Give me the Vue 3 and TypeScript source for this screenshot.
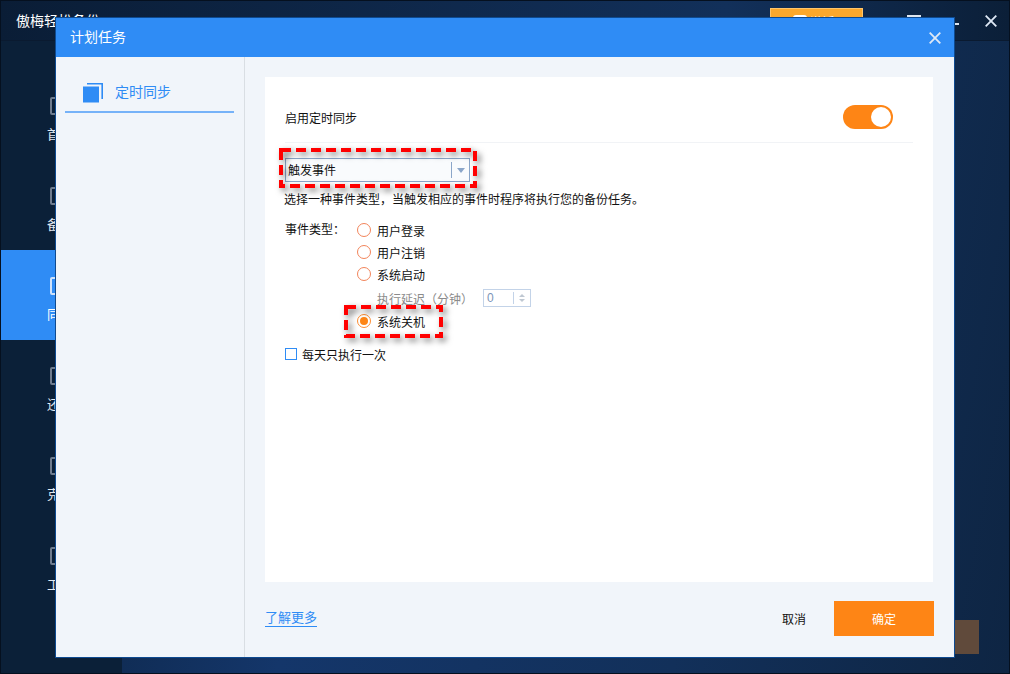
<template>
  <div class="app-window">
    <!-- Background app -->
    <header class="topbar">
      <span class="app-title">傲梅轻松备份</span>
      <div class="top-actions">
        <button class="upgrade-btn"><span class="upgrade-icon"></span>激活 ▾</button>
        <span class="menu-icon"></span>
        <span class="min-icon"></span>
        <svg class="win-close" width="12" height="12" viewBox="0 0 12 12"><path d="M.7.7l10.6 10.6M11.3.7L.7 11.3" /></svg>
      </div>
    </header>
    <div class="body-row">
      <nav class="side">
        <div v-for="item in sideItems" :key="item" :class="['side-item', { active: item === '同步' }]">
          <span class="side-icon"></span>
          <span class="side-label">{{ item }}</span>
        </div>
      </nav>
      <div class="promo"></div>
    </div>

    <!-- Modal -->
    <section class="modal">
      <div class="modal-head">
        <span>计划任务</span>
        <svg class="modal-close" width="12" height="12" viewBox="0 0 12 12"><path d="M.7.7l10.6 10.6M11.3.7L.7 11.3" /></svg>
      </div>
      <div class="modal-body">
        <aside class="modal-nav">
          <div class="nav-tab">
            <svg width="20" height="20" viewBox="0 0 20 20">
              <rect x="0" y="3.500" width="16" height="16" fill="#2f8cf5" />
              <path d="M4 .8h15.200v15.200" fill="none" stroke="#2f8cf5" stroke-width="1.600" />
            </svg>
            <span>定时同步</span>
          </div>
        </aside>
        <div class="modal-main">
          <div class="panel">
            <div class="enable-row">
              <span>启用定时同步</span>
              <span class="toggle"><span class="knob"></span></span>
            </div>

            <div class="select-wrap">
              <div class="select">
                <span class="select-text">触发事件</span>
                <span class="select-arrow"></span>
              </div>
              <svg class="mark mark-select" width="198" height="40">
                <rect x="2" y="2" width="194" height="36" />
              </svg>
            </div>

            <p class="desc">选择一种事件类型，当触发相应的事件时程序将执行您的备份任务。</p>

            <div class="events">
              <span class="events-label">事件类型：</span>
              <div class="event-list">
                <label v-for="ev in events" :key="ev" class="radio-row">
                  <span class="radio"></span>{{ ev }}
                </label>
                <div class="delay-row">
                  <span>执行延迟（分钟）</span>
                  <div class="spin">
                    <span class="spin-val">0</span>
                    <span class="spin-btns"><i class="up"></i><i class="down"></i></span>
                  </div>
                </div>
                <label class="radio-row checked">
                  <span class="radio"><i></i></span>系统关机
                  <svg class="mark mark-radio" width="99" height="33">
                    <rect x="2" y="2" width="95" height="29" />
                  </svg>
                </label>
              </div>
            </div>

            <label class="once-row"><span class="check"></span>每天只执行一次</label>
          </div>
          <div class="modal-foot">
            <a class="more">了解更多</a>
            <div class="foot-btns">
              <button class="cancel">取消</button>
              <button class="ok">确定</button>
            </div>
          </div>
        </div>
      </div>
    </section>
  </div>
</template>

<script setup lang="ts">
const sideItems: string[] = ['首页', '备份', '同步', '还原', '克隆', '工具']
const events: string[] = ['用户登录', '用户注销', '系统启动']
</script>

<style>
html, body { margin: 0; background: #0b2038; }
</style>

<style scoped>
.app-window {
  position: relative;
  width: 1010px;
  height: 674px;
  overflow: hidden;
  box-sizing: border-box;
  border: 1px solid #05101f;
  background: linear-gradient(100deg, #0a1f38 0%, #14366a 35%, #12305a 70%, #0e2543 100%);
  font-family: "Liberation Sans", "Noto Sans CJK SC", sans-serif;
  font-size: 12px;
  color: #111;
}

/* background app */
.topbar {
  height: 39px;
  display: flex;
  align-items: center;
  justify-content: space-between;
  background: linear-gradient(90deg, #0a1d36 0%, #12305a 72%, #0b1f38 100%);
  border-bottom: 1px solid #0a1a30;
}
.app-title {
  margin-left: 15px;
  margin-top: -1px;
  color: #fff;
  font-size: 14px;
}
.top-actions { display: flex; align-items: flex-start; height: 100%; }
.upgrade-btn {
  width: 93px;
  height: 26px;
  margin-top: 7px;
  border: 1px solid #ffc56a;
  background: #fba82c;
  color: #fff;
  font: inherit;
  padding: 0 0 0 4px;
}
.upgrade-icon {
  display: inline-block;
  width: 14px;
  height: 12px;
  margin-right: 4px;
  border-radius: 3px;
  background: #fff;
}
.menu-icon {
  width: 14px;
  height: 8px;
  margin: 14px 0 0 44px;
  border-top: 2px solid #dfe6ef;
  border-bottom: 2px solid #dfe6ef;
}
.min-icon {
  width: 14px;
  height: 2px;
  margin: 22px 0 0 24px;
  background: #dfe6ef;
}
.win-close { margin: 14px 12px 0 26px; flex: none; }
.win-close path, .modal-close path { stroke: #dfe9f6; stroke-width: 1.800; fill: none; }

.body-row { display: flex; height: 633px; }
.side {
  width: 121px;
  flex: none;
  padding-top: 29px;
  background: #0b2038;
}
.side-item {
  height: 90px;
  box-sizing: border-box;
  padding: 27px 0 0 49px;
  display: flex;
  flex-direction: column;
  gap: 13px;
  color: #e3e9f1;
  font-size: 13px;
}
.side-item.active { background: #2f8cf5; color: #fff; }
.side-icon {
  width: 18px;
  height: 18px;
  box-sizing: border-box;
  border: 2px solid #6f7c8e;
  border-radius: 2px;
}
.side-item.active .side-icon { border-color: #cfe2fb; }
.side-label { line-height: 14px; white-space: nowrap; margin-left: -3px; }
.promo { flex: 1; position: relative; }
.promo::after {
  content: "";
  position: absolute;
  right: 30px;
  top: 579px;
  width: 60px;
  height: 34px;
  background: #604a3b;
}

/* modal */
.modal {
  position: absolute;
  left: 54px;
  top: 16px;
  width: 900px;
  height: 641px;
  box-sizing: border-box;
  border: 1px solid #0e4a90;
  display: flex;
  flex-direction: column;
  background: #f1f5fa;
}
.modal-head {
  height: 39px;
  flex: none;
  box-sizing: border-box;
  display: flex;
  align-items: center;
  justify-content: space-between;
  padding: 0 13px 3px 14px;
  background: #2f8cf5;
  color: #fff;
  font-size: 14px;
}
.modal-close { margin-top: 3px; }
.modal-body { flex: 1; display: flex; min-height: 0; }
.modal-nav {
  width: 188px;
  flex: none;
  box-sizing: content-box;
  border-right: 1px solid #d9dee3;
  padding-top: 26px;
}
.nav-tab {
  margin: 0 10px 0 9px;
  height: 28px;
  padding-left: 18px;
  display: flex;
  align-items: flex-start;
  gap: 12px;
  border-bottom: 2px solid #76b2f8;
  color: #2f8cf5;
  font-size: 14px;
  line-height: 18px;
}
.modal-main {
  flex: 1;
  display: flex;
  flex-direction: column;
  padding: 20px 21px 0 20px;
  min-width: 0;
}
.panel {
  height: 505px;
  flex: none;
  box-sizing: border-box;
  padding: 0 20px;
  background: #fff;
}
.enable-row {
  height: 49px;
  padding: 16px 20px 0 0;
  display: flex;
  align-items: center;
  justify-content: space-between;
  border-bottom: 1px solid #f1f3f6;
}
.toggle {
  position: relative;
  width: 50px;
  height: 24px;
  margin-top: -1px;
  border-radius: 12px;
  background: #fe8515;
}
.knob {
  position: absolute;
  right: 2px;
  top: 2px;
  width: 20px;
  height: 20px;
  border-radius: 50%;
  background: #fff;
}
.select-wrap { position: relative; margin-top: 15px; width: 185px; }
.select {
  height: 24px;
  box-sizing: border-box;
  display: flex;
  align-items: center;
  justify-content: space-between;
  border: 1px solid #8ba6c9;
  background: #f9fbfd;
  padding: 0 0 1px 2px;
  font-size: 12px;
}
.select-arrow {
  position: relative;
  width: 17px;
  height: 16px;
  border-left: 1px solid #8ba6c9;
}
.select-arrow::after {
  content: "";
  position: absolute;
  left: 5px;
  top: 6px;
  border-left: 4px solid transparent;
  border-right: 4px solid transparent;
  border-top: 5px solid #8ba6c9;
}
.mark {
  position: absolute;
  overflow: visible;
  filter: drop-shadow(3px 3px 3px rgba(0, 0, 0, .55));
  pointer-events: none;
}
.mark rect {
  fill: none;
  stroke: #f00;
  stroke-width: 4;
  stroke-dasharray: 10 5;
}
.mark-select { left: -6px; top: -10px; }
.desc { margin: 9px 0 0 -1px; line-height: 18px; }
.events { display: flex; margin-top: 10px; }
.events-label { width: 72px; flex: none; line-height: 18px; margin-top: 2px; }
.event-list { display: flex; flex-direction: column; }
.radio-row {
  position: relative;
  display: flex;
  align-items: center;
  gap: 6px;
  height: 22px;
  width: fit-content;
}
.radio {
  width: 14px;
  height: 14px;
  box-sizing: border-box;
  border: 1.500px solid #f2845a;
  border-radius: 50%;
  display: flex;
  align-items: center;
  justify-content: center;
}
.radio-row.checked .radio { border-color: #fd8d33; }
.radio i { width: 8px; height: 8px; border-radius: 50%; background: #fe8515; }
.mark-radio { left: -13px; top: -5px; }
.delay-row {
  display: flex;
  align-items: center;
  gap: 10px;
  height: 24px;
  margin: 1px 0 0 20px;
  color: #8b8b8b;
}
.spin {
  width: 48px;
  height: 18px;
  box-sizing: border-box;
  border: 1px solid #c3d3e8;
  display: flex;
  justify-content: space-between;
  align-items: center;
  padding-left: 3px;
}
.spin-val { color: #7b95b8; }
.spin-btns {
  width: 16px;
  height: 12px;
  border-left: 1px solid #c3d3e8;
  display: flex;
  flex-direction: column;
  align-items: center;
  justify-content: center;
  gap: 2px;
}
.spin-btns i { width: 0; height: 0; border-left: 3px solid transparent; border-right: 3px solid transparent; }
.spin-btns .up { border-bottom: 3px solid #bfc8d2; }
.spin-btns .down { border-top: 3px solid #bfc8d2; }
.once-row {
  display: flex;
  align-items: center;
  gap: 5px;
  margin-top: 11px;
  height: 22px;
}
.check {
  width: 12px;
  height: 12px;
  box-sizing: border-box;
  border: 1px solid #2f8cf5;
}
.modal-foot {
  flex: 1;
  display: flex;
  align-items: flex-start;
  justify-content: space-between;
  padding-top: 19px;
}
.more {
  margin-top: 8px;
  color: #2f8cf5;
  font-size: 13px;
  line-height: 17px;
  border-bottom: 1px solid #2f8cf5;
}
.foot-btns { display: flex; align-items: center; margin-right: -1px; }
.foot-btns button { border: 0; font: inherit; padding: 0; }
.cancel { width: 80px; height: 35px; background: transparent; color: #111; }
.ok { width: 100px; height: 35px; background: #fe8515; color: #fff; }
</style>
